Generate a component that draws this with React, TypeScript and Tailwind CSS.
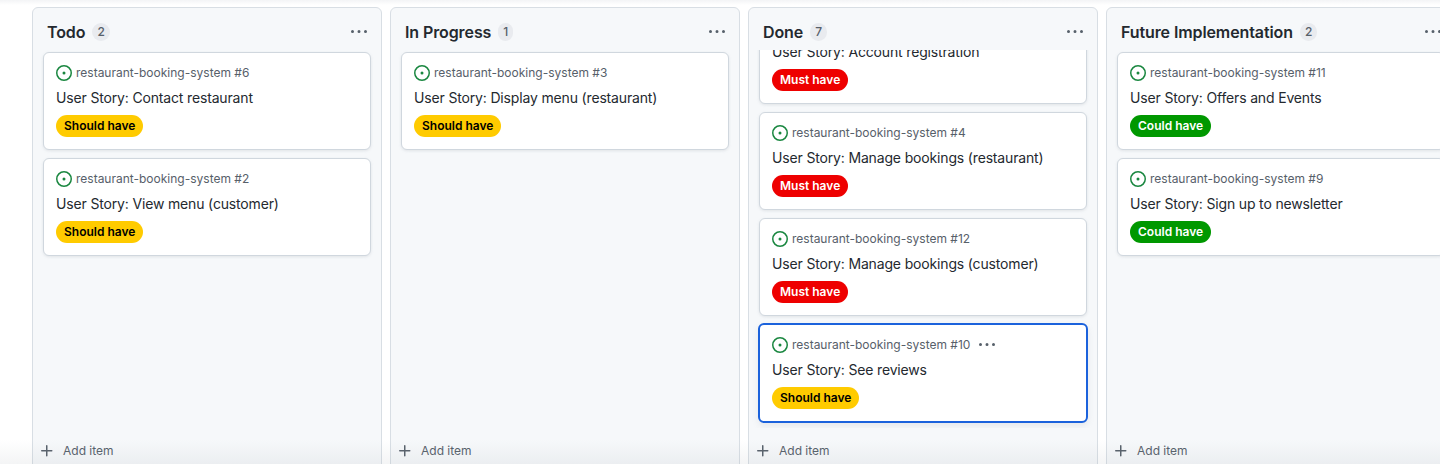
const issueClass = "h-4 w-4 shrink-0 fill-[#1a8740]";

function IssueIcon() {
  return (
    <svg viewBox="0 0 16 16" className={issueClass}>
      <path d="M8 9.5a1.5 1.5 0 1 0 0-3 1.5 1.5 0 0 0 0 3Z" />
      <path d="M8 0a8 8 0 1 1 0 16A8 8 0 0 1 8 0ZM1.5 8a6.5 6.5 0 1 0 13 0 6.5 6.5 0 0 0-13 0Z" />
    </svg>
  );
}

function Kebab() {
  return (
    <svg viewBox="0 0 16 16" className="h-4 w-4 shrink-0 fill-[#57606a]">
      <path d="M8 9a1.5 1.5 0 1 0 0-3 1.5 1.5 0 0 0 0 3ZM1.5 9a1.5 1.5 0 1 0 0-3 1.5 1.5 0 0 0 0 3Zm13 0a1.5 1.5 0 1 0 0-3 1.5 1.5 0 0 0 0 3Z" />
    </svg>
  );
}

function PlusIcon() {
  return (
    <svg viewBox="0 0 16 16" className="h-4 w-4 shrink-0 fill-[#57606a]">
      <path d="M7.75 2a.75.75 0 0 1 .75.75V7h4.25a.75.75 0 0 1 0 1.5H8.5v4.25a.75.75 0 0 1-1.5 0V8.5H2.75a.75.75 0 0 1 0-1.5H7V2.75A.75.75 0 0 1 7.75 2Z" />
    </svg>
  );
}

type Priority = "should" | "must" | "could";

const badges: Record<Priority, { label: string; className: string }> = {
  should: { label: "Should have", className: "bg-[#ffcb00] text-black" },
  must: { label: "Must have", className: "bg-[#ee0000] text-white" },
  could: { label: "Could have", className: "bg-[#009800] text-white" },
};

interface Item {
  number: number;
  title: string;
  priority: Priority;
  selected?: boolean;
}

function Card({ item }: { item: Item }) {
  const badge = badges[item.priority];
  return (
    <div
      className={
        item.selected
          ? "-mx-px -my-px h-[100px] rounded-md border-2 border-[#1b62dc] bg-white px-3 pt-[11px] shadow-[0_3px_6px_rgba(140,149,159,0.15)]"
          : "h-[98px] rounded-md border border-[#d0d7de] bg-white px-3 pt-[11px] shadow-[0_1px_3px_rgba(140,149,159,0.2)]"
      }
    >
      <div className="flex h-[18px] items-center gap-1 text-xs text-[#57606a]">
        <IssueIcon />
        <span>restaurant-booking-system #{item.number}</span>
        {item.selected && (
          <span className="ml-[5px]">
            <Kebab />
          </span>
        )}
      </div>
      <div className="mt-[5px] h-[21px] text-sm leading-[21px] tracking-[-0.16px] text-[#24292f]">User Story: {item.title}</div>
      <div className="mt-[7px] flex">
        <span className={`rounded-full px-2 text-xs font-semibold leading-[22px] ${badge.className}`}>{badge.label}</span>
      </div>
    </div>
  );
}

function Column({ name, count, items, offset }: { name: string; count: number; items: Item[]; offset?: boolean }) {
  return (
    <section className="flex h-[470px] w-[350px] shrink-0 flex-col rounded-md border border-[#d8dee4] bg-[#f6f8fa]">
      <header className="flex h-[42px] shrink-0 items-center justify-between pl-[14px] pr-[14px] pt-[5px]">
        <div className="flex items-center gap-[7px]">
          <h2 className="text-base font-semibold tracking-[-0.1px] text-[#24292f]">{name}</h2>
          <span className="rounded-full bg-[#e9ebef] px-[5px] text-xs font-medium leading-[18px] text-[#57606a]">{count}</span>
        </div>
        <Kebab />
      </header>
      <div className="min-h-0 flex-1 overflow-hidden px-[10px]">
        <div className={offset ? "-mt-[44px] flex flex-col gap-2" : "mt-[2px] flex flex-col gap-2"}>
          {items.map((item) => (
            <Card key={item.number} item={item} />
          ))}
        </div>
      </div>
      <footer className="flex h-[48px] shrink-0 items-start gap-2 pl-[6px] pt-[15px] text-xs text-[#57606a]">
        <PlusIcon />
        <span>Add item</span>
      </footer>
    </section>
  );
}

const todo: Item[] = [
  { number: 6, title: "Contact restaurant", priority: "should" },
  { number: 2, title: "View menu (customer)", priority: "should" },
];
const progress: Item[] = [{ number: 3, title: "Display menu (restaurant)", priority: "should" }];
const done: Item[] = [
  { number: 1, title: "Account registration", priority: "must" },
  { number: 4, title: "Manage bookings (restaurant)", priority: "must" },
  { number: 12, title: "Manage bookings (customer)", priority: "must" },
  { number: 10, title: "See reviews", priority: "should", selected: true },
];
const future: Item[] = [
  { number: 11, title: "Offers and Events", priority: "could" },
  { number: 9, title: "Sign up to newsletter", priority: "could" },
];

export default function App() {
  return (
    <main className="relative h-[464px] w-[1440px] overflow-hidden bg-white font-['Inter',sans-serif]">
      <div className="flex gap-2 pl-8 pt-[7px]">
        <Column name="Todo" count={2} items={todo} />
        <Column name="In Progress" count={1} items={progress} />
        <Column name="Done" count={7} items={done} offset />
        <Column name="Future Implementation" count={2} items={future} />
      </div>
      <div className="pointer-events-none absolute inset-x-0 top-0 h-[5px] bg-gradient-to-b from-[#f3f4f6] to-white" />
      <div className="pointer-events-none absolute inset-x-0 bottom-0 h-6 bg-gradient-to-b from-transparent to-[#8c959f]/10" />
    </main>
  );
}
